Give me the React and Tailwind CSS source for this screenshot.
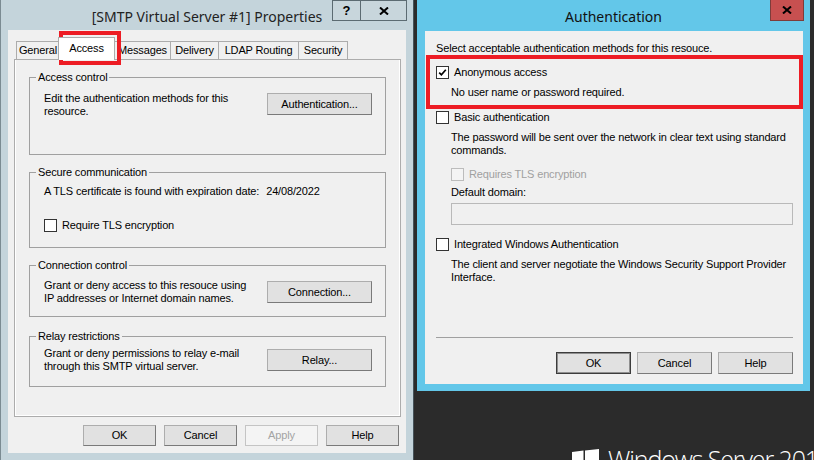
import React from "react";

const Check = ({ checked, disabled }) => (
  <span
    className={
      disabled
        ? "flex h-[13px] w-[13px] shrink-0 items-center justify-center border border-[#bcbcbc] bg-[#f4f4f4]"
        : "flex h-[13px] w-[13px] shrink-0 items-center justify-center border border-[#333333] bg-white"
    }
  >
    {checked && (
      <svg width="9" height="9" viewBox="0 0 9 9">
        <path d="M1.2 4.6 L3.4 6.8 L7.8 1.8" fill="none" stroke="#000" strokeWidth="1.7" />
      </svg>
    )}
  </span>
);

const Btn = ({ children, className }) => (
  <div
    className={
      "flex shrink-0 items-center justify-center border border-[#adadad] border-r-[#7a7a7a] border-b-[#7a7a7a] bg-[#e1e1e1] " +
      className
    }
  >
    {children}
  </div>
);

const CloseX = ({ size = 10 }) => (
  <svg width={size} height={size - 2} viewBox="0 0 10 8">
    <path d="M1 0.5 L9 7.5 M9 0.5 L1 7.5" stroke="#000" strokeWidth="2" />
  </svg>
);

function PropertiesWindow() {
  const tabs = [
    { label: "General", w: "w-[44px]" },
    { label: "Access", w: "w-[57px]", active: true },
    { label: "Messages", w: "w-[57px]" },
    { label: "Delivery", w: "w-[49px]" },
    { label: "LDAP Routing", w: "w-[81px]" },
    { label: "Security", w: "w-[50px]" },
  ];

  return (
    <div className="flex h-[460px] w-[414px] shrink-0 flex-col border-x border-l-[#7b8b92] border-r-[#46535a] bg-[#c4d4db]">
      <div className="relative flex h-[30px] items-center justify-center pt-[2px] font-['Noto_Sans',sans-serif] text-[14px] tracking-normal text-[#222]">
        [SMTP Virtual Server #1] Properties
        <div className="absolute right-[6px] top-0 flex">
          <div className="flex h-[21px] w-[29px] items-center justify-center border border-[#5c6b72] bg-[#c8d6dc] font-['Liberation_Sans',sans-serif] text-[13px] font-bold text-black">
            ?
          </div>
          <div className="flex h-[21px] w-[46px] items-center justify-center border border-l-0 border-[#5c6b72] bg-[#c8d6dc]">
            <CloseX />
          </div>
        </div>
      </div>

      <div className="relative ml-[7px] flex h-[423px] w-[398px] flex-col bg-[#f0f0f0]">
        {/* tabs */}
        <div className="ml-[8px] mt-[7px] flex h-[22px] items-end">
          {tabs.map((t) =>
            t.active ? (
              <div
                key={t.label}
                className={"relative z-10 -mb-px -ml-[2px] flex h-[23px] items-center justify-center border-x border-t border-[#acacac] bg-white pb-[2px] " + t.w}
              >
                {t.label}
              </div>
            ) : (
              <div
                key={t.label}
                className={"-ml-px flex h-[18px] items-center justify-center border-x border-t border-[#acacac] bg-[#f0f0f0] first:ml-0 " + t.w}
              >
                {t.label}
              </div>
            )
          )}
        </div>

        {/* red highlight around Access tab */}
        <div className="absolute left-[51px] top-[1px] h-[34px] w-[62px] border-4 border-[#ed1c24]" />

        {/* tab page */}
        <div className="ml-[6px] flex h-[358px] w-[387px] flex-col border border-[#acacac] bg-[#f0f0f0] px-[14px] shadow-[inset_1px_0_0_#fff,inset_-1px_-1px_0_#fff]">
          <fieldset className="mt-[11px] h-[84px] border border-[#a0a0a0]">
            <legend className="ml-[6px] px-[2px]">Access control</legend>
            <div className="mt-[8px] flex justify-between pl-[14px] pr-[13px]">
              <div className="whitespace-nowrap">
                Edit the authentication methods for this
                <br />
                resource.
              </div>
              <Btn className="mt-[1px] h-[22px] w-[105px]">Authentication...</Btn>
            </div>
          </fieldset>

          <fieldset className="mt-[11px] h-[82px] border border-[#a0a0a0]">
            <legend className="ml-[6px] px-[2px]">Secure communication</legend>
            <div className="mt-[6px] whitespace-nowrap pl-[14px]">
              A TLS certificate is found with expiration date:
              <span className="ml-[7px]">24/08/2022</span>
            </div>
            <div className="mt-[21px] flex items-center pl-[14px]">
              <Check />
              <span className="ml-[5px]">Require TLS encryption</span>
            </div>
          </fieldset>

          <fieldset className="mt-[11px] h-[58px] border border-[#a0a0a0]">
            <legend className="ml-[6px] px-[2px]">Connection control</legend>
            <div className="mt-[7px] flex justify-between pl-[14px] pr-[13px]">
              <div className="whitespace-nowrap">
                Grant or deny access to this resouce using
                <br />
                IP addresses or Internet domain names.
              </div>
              <Btn className="mt-[2px] h-[22px] w-[105px]">Connection...</Btn>
            </div>
          </fieldset>

          <fieldset className="mt-[13px] h-[57px] border border-[#a0a0a0]">
            <legend className="ml-[6px] px-[2px]">Relay restrictions</legend>
            <div className="mt-[4px] flex justify-between pl-[14px] pr-[13px]">
              <div className="whitespace-nowrap">
                Grant or deny permissions to relay e-mail
                <br />
                through this SMTP virtual server.
              </div>
              <Btn className="mt-[2px] h-[22px] w-[105px]">Relay...</Btn>
            </div>
          </fieldset>
        </div>

        <div className="mr-[7px] mt-[8px] flex justify-end gap-[8px]">
          <Btn className="h-[21px] w-[73px]">OK</Btn>
          <Btn className="h-[21px] w-[73px]">Cancel</Btn>
          <div className="flex h-[21px] w-[73px] items-center justify-center border border-[#c4c4c4] bg-[#f4f4f4] text-[#a3a3a3]">
            Apply
          </div>
          <Btn className="h-[21px] w-[73px]">Help</Btn>
        </div>
      </div>
    </div>
  );
}

function AuthWindow() {
  return (
    <div className="flex h-[391px] w-[393px] shrink-0 flex-col bg-[#63c7e9]">
      <div className="relative flex h-[31px] items-center justify-center pt-[1px] font-['Noto_Sans',sans-serif] text-[14px] tracking-normal text-[#111]">
        Authentication
        <div className="absolute right-[6px] top-0 flex h-[21px] w-[34px] items-center justify-center border border-t-0 border-[#7e3c3a] bg-[#c75050]">
          <CloseX />
        </div>
      </div>

      <div className="relative ml-[8px] flex h-[353px] w-[378px] flex-col bg-[#f0f0f0] pl-[11px] pt-[11px]">
        <div>Select acceptable authentication methods for this resouce.</div>

        <div className="mt-[11px] flex h-[13px] items-center">
          <Check checked />
          <span className="ml-[5px]">Anonymous access</span>
        </div>
        <div className="mt-[7px] pl-[15px]">No user name or password required.</div>

        <div className="mt-[12px] flex h-[13px] items-center">
          <Check />
          <span className="ml-[5px]">Basic authentication</span>
        </div>
        <div className="mt-[7px] pl-[15px]">
          The password will be sent over the network in clear text using standard
          <br />
          commands.
        </div>

        <div className="mt-[11px] flex h-[13px] items-center pl-[15px]">
          <Check disabled />
          <span className="ml-[5px] text-[#a0a0a0]">Requires TLS encryption</span>
        </div>
        <div className="mt-[5px] pl-[15px]">Default domain:</div>
        <div className="ml-[15px] mt-[4px] h-[22px] w-[342px] border border-[#b9b9b9] bg-[#f0f0f0]" />

        <div className="mt-[13px] flex h-[13px] items-center">
          <Check />
          <span className="ml-[5px]">Integrated Windows Authentication</span>
        </div>
        <div className="mt-[7px] pl-[15px]">
          The client and server negotiate the Windows Security Support Provider
          <br />
          Interface.
        </div>

        <div className="mt-[53px] h-px w-[357px] bg-[#a0a0a0]" />

        <div className="mt-[14px] flex w-[357px] justify-end gap-[6px]">
          <div className="flex h-[22px] w-[75px] items-center justify-center border border-[#3c3c3c] bg-[#e1e1e1] shadow-[inset_0_0_0_1px_#8f8f8f]">
            OK
          </div>
          <Btn className="h-[22px] w-[75px]">Cancel</Btn>
          <Btn className="h-[22px] w-[75px]">Help</Btn>
        </div>

        {/* red highlight around Anonymous access */}
        <div className="absolute left-[1px] top-[24px] h-[54px] w-[377px] border-4 border-[#ed1c24]" />
      </div>
    </div>
  );
}

function ServerLogo() {
  return (
    <div className="ml-[155px] mt-[58px] flex items-start">
      <svg width="27" height="14" viewBox="0 0 27 14" className="shrink-0">
        <polygon points="0,3 11.5,1.6 11.5,14 0,14" fill="#fff" />
        <polygon points="13,1.4 27,0 27,14 13,14" fill="#fff" />
      </svg>
      <span className="ml-[9px] -mt-[2px] whitespace-nowrap font-['Open_Sans',sans-serif] text-[25px] font-light leading-[25px] tracking-[-1.1px] text-white">
        Windows Server 2012
      </span>
    </div>
  );
}

export default function App() {
  return (
    <div className="flex h-[460px] w-[814px] overflow-hidden bg-[#2b2b2b] font-['Liberation_Sans',Arial,sans-serif] text-[11px] leading-[13px] tracking-[-0.15px] text-black">
      <PropertiesWindow />
      <div className="ml-[3px] flex flex-col">
        <AuthWindow />
        <ServerLogo />
      </div>
    </div>
  );
}
